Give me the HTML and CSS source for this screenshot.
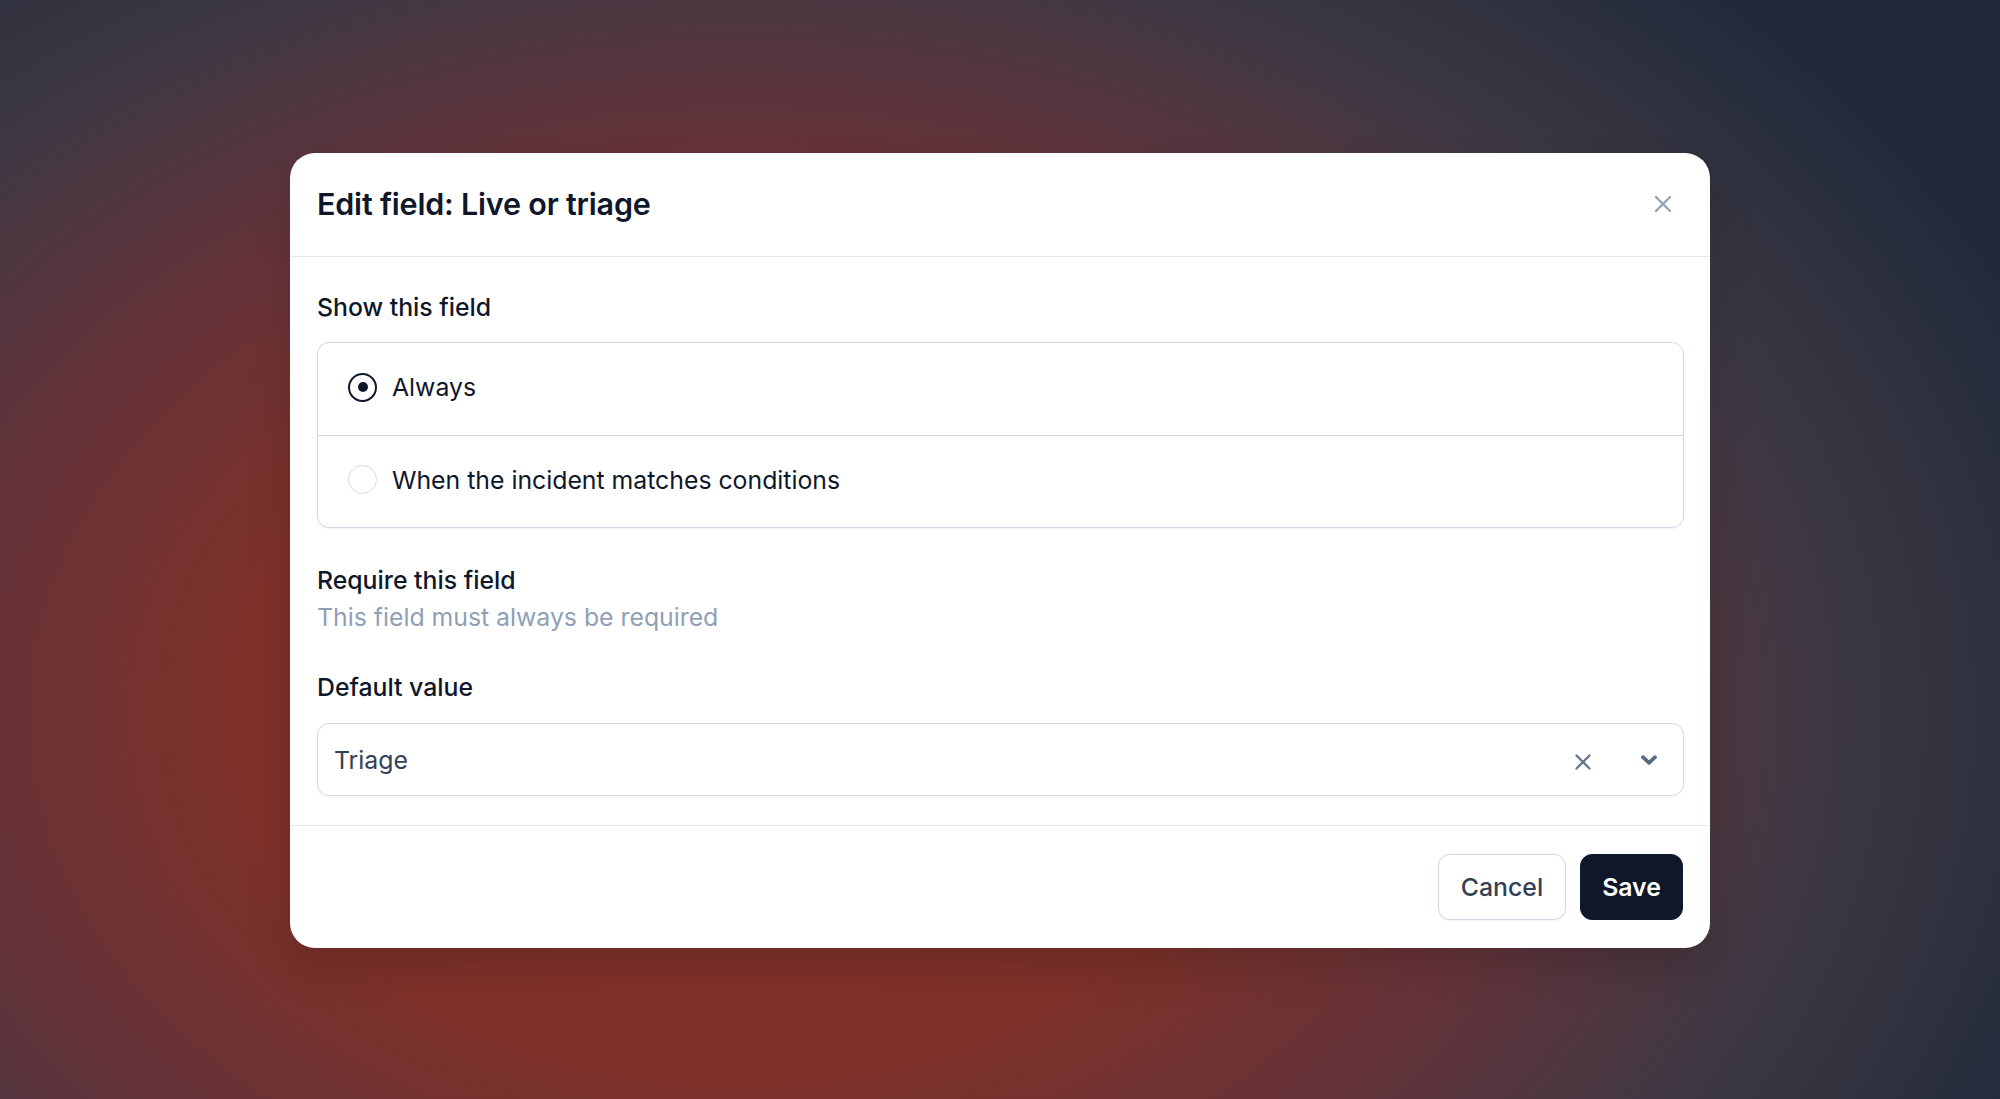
FILE: index.html
```html
<!DOCTYPE html>
<html lang="en">
<head>
<meta charset="utf-8">
<title>Edit field</title>
<link rel="stylesheet" href="styles.css">
</head>
<body>
<div class="modal">
  <div class="modal-header">
    <h2 class="title">Edit field: Live or triage</h2>
    <button class="close-btn" aria-label="Close">
      <svg viewBox="0 0 18 18" width="18" height="18"><path d="M2 2L16 16M16 2L2 16" stroke="#94a3b8" stroke-width="2.4" stroke-linecap="round" fill="none"/></svg>
    </button>
  </div>
  <div class="modal-body">
    <div class="label">Show this field</div>
    <div class="options">
      <label class="option">
        <span class="radio checked"></span>
        <span class="option-text">Always</span>
      </label>
      <label class="option">
        <span class="radio"></span>
        <span class="option-text">When the incident matches conditions</span>
      </label>
    </div>
    <div class="label label-require">Require this field</div>
    <div class="help">This field must always be required</div>
    <div class="label label-default">Default value</div>
    <div class="select">
      <span class="select-value">Triage</span>
      <span class="select-icons">
        <svg class="clear-icon" viewBox="0 0 18 18" width="18" height="18"><path d="M2.5 2.5L15.5 15.5M15.5 2.5L2.5 15.5" stroke="#64748b" stroke-width="2.3" stroke-linecap="round" fill="none"/></svg>
        <svg class="chevron-icon" viewBox="0 0 20 12" width="20" height="12"><path d="M4 3.2L10 8.8L16 3.2" stroke="#5b6b82" stroke-width="3.8" stroke-linecap="round" stroke-linejoin="round" fill="none"/></svg>
      </span>
    </div>
  </div>
  <div class="modal-footer">
    <button class="btn btn-secondary">Cancel</button>
    <button class="btn btn-primary">Save</button>
  </div>
</div>
</body>
</html>
```

FILE: styles.css
```css
* { box-sizing: border-box; }
html, body { margin: 0; padding: 0; }
body {
  width: 2000px;
  height: 1099px;
  overflow: hidden;
  font-family: Inter, "Noto Sans", sans-serif;
  background:
    radial-gradient(ellipse 70% 92% at 37% 65%, #89342a 0%, #7e3129 36%, #64333a 57%, #3e3843 77%, #212a3a 100%);
  display: flex;
  justify-content: center;
  align-items: flex-start;
  padding-top: 153px;
}
.modal {
  width: 1420px;
  background: #ffffff;
  border-radius: 25px;
  overflow: hidden;
  box-shadow: 0 20px 40px rgba(0,0,0,0.15);
}
.modal-header {
  height: 104px;
  padding: 0 26px 0 27px;
  display: flex;
  align-items: center;
  justify-content: space-between;
  border-bottom: 1.5px solid #e5e9f0;
}
.title {
  margin: 0 0 2px 0;
  font-size: 30.5px;
  font-weight: 600;
  color: #0f172a;
  letter-spacing: -0.2px;
}
.close-btn {
  width: 36px;
  height: 36px;
  border: 0;
  background: transparent;
  padding: 0;
  display: flex;
  align-items: center;
  justify-content: center;
  margin-right: 3px;
  margin-bottom: 2px;
}
.modal-body {
  padding: 34px 26px 29px 27px;
}
.label {
  font-size: 24.8px;
  line-height: 32px;
  font-weight: 500;
  color: #0f172a;
}
.options {
  margin-top: 19px;
  border: 1px solid #cfd8e4;
  border-radius: 12px;
  box-shadow: 0 1px 2px rgba(15,23,42,0.06);
}
.option {
  height: 92px;
  display: flex;
  align-items: center;
  padding: 0 30px 4px 30px;
  gap: 15px;
}
.option + .option { border-top: 1px solid #cfd8e4; }
.radio {
  width: 29px;
  height: 29px;
  border-radius: 50%;
  border: 1.5px solid #d5dde8;
  flex: none;
  position: relative;
}
.radio.checked { border: 2px solid #0f172a; }
.radio.checked::after {
  content: "";
  position: absolute;
  left: 50%; top: 50%;
  width: 10px; height: 10px;
  margin: -5px 0 0 -5px;
  border-radius: 50%;
  background: #0f172a;
}
.option-text {
  font-size: 24.8px;
  color: #0f172a;
}
.label-require { margin-top: 36px; }
.help {
  margin-top: 5px;
  font-size: 24.8px;
  line-height: 32px;
  color: #8f9fb6;
}
.label-default { margin-top: 38px; }
.select {
  margin-top: 20px;
  height: 73px;
  border: 1px solid #cfd8e4;
  border-radius: 12px;
  box-shadow: 0 1px 2px rgba(15,23,42,0.06);
  display: flex;
  align-items: center;
  justify-content: space-between;
  padding: 0 24px 0 16px;
}
.select-value {
  font-size: 24.8px;
  color: #334155;
}
.select-icons {
  display: flex;
  align-items: center;
  gap: 47px;
}
.clear-icon { margin-top: 4px; }
.modal-footer {
  border-top: 1.5px solid #e5e9f0;
  padding: 28px 27px 28px 26px;
  display: flex;
  justify-content: flex-end;
  gap: 14px;
}
.btn {
  height: 66px;
  border-radius: 12px;
  font-family: Inter, "Noto Sans", sans-serif;
  font-size: 24.8px;
  padding: 0;
}
.btn-secondary {
  width: 128px;
  background: #ffffff;
  border: 1px solid #cfd8e4;
  color: #334155;
  font-weight: 500;
  box-shadow: 0 1px 2px rgba(15,23,42,0.06);
}
.btn-primary {
  width: 103px;
  background: #0f172a;
  border: 1px solid #0f172a;
  color: #ffffff;
  font-weight: 600;
}
```
